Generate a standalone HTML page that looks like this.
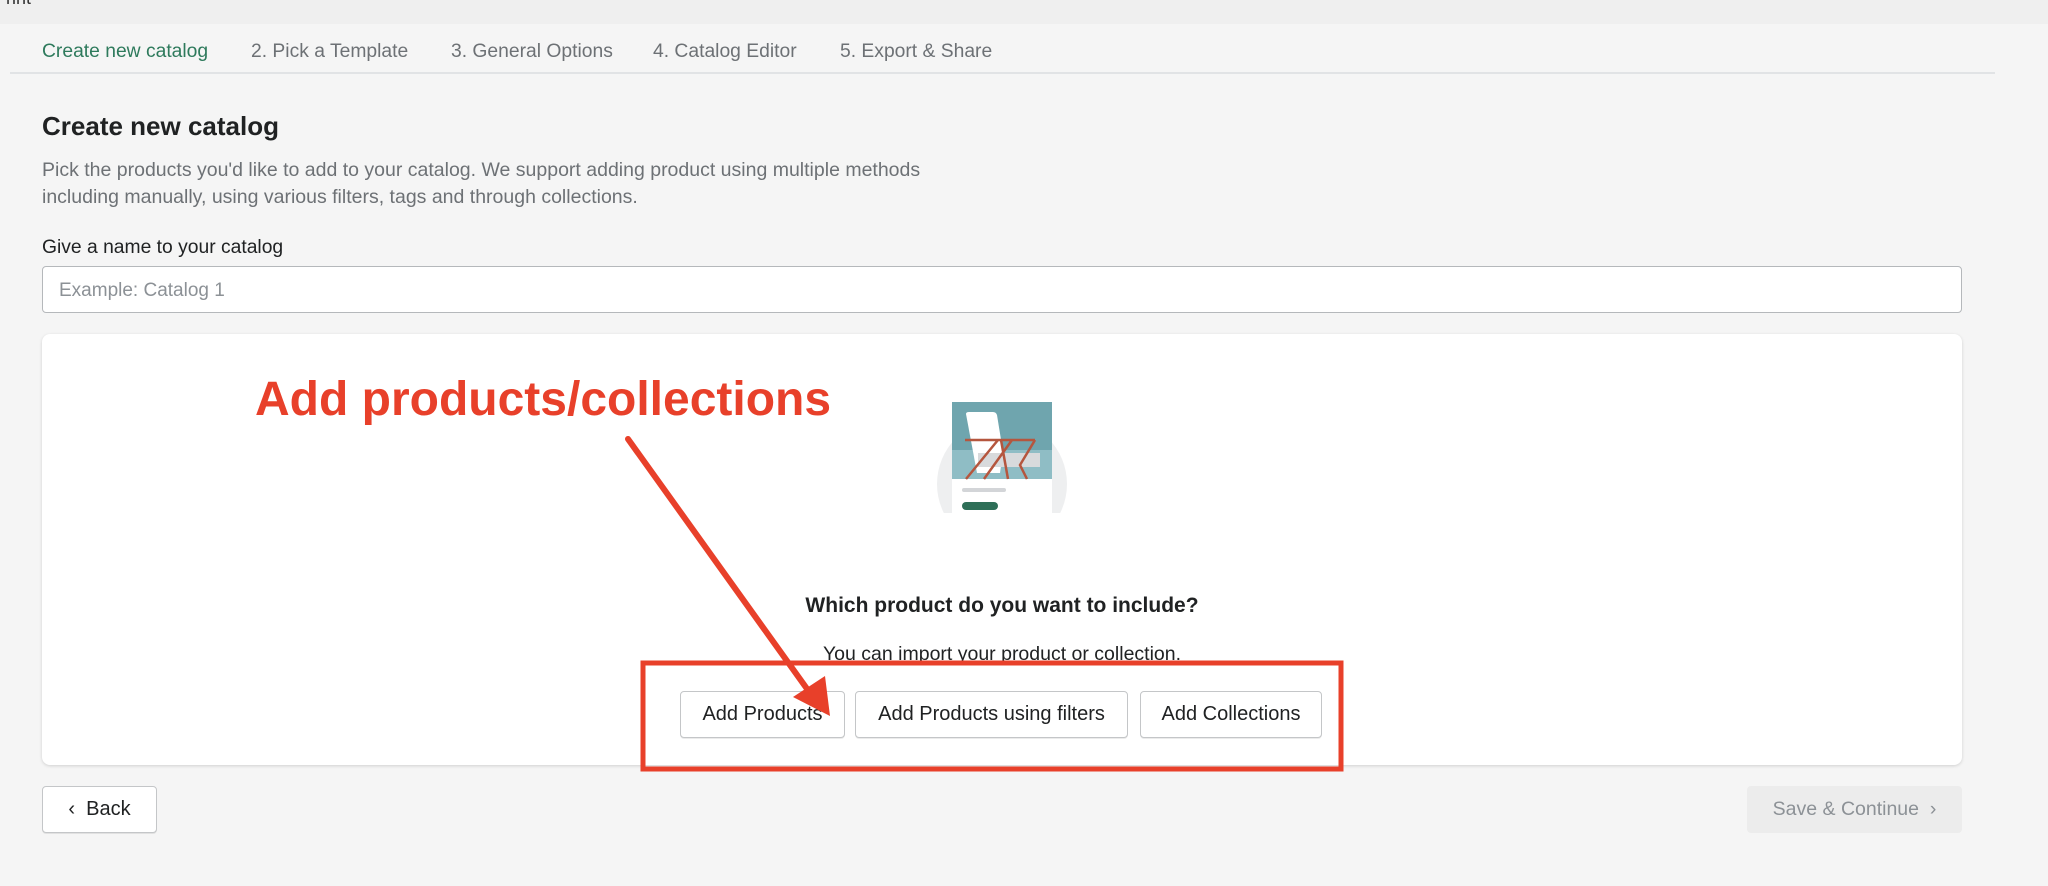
<!DOCTYPE html>
<html><head><meta charset="utf-8"><style>
*{box-sizing:border-box;margin:0;padding:0}
body{width:2048px;height:886px;background:#f5f5f5;font-family:"Liberation Sans",sans-serif;position:relative;overflow:hidden;color:#202223}
.a{position:absolute;white-space:nowrap}
.tab{top:41px;font-size:19.3px;color:#6d7175}
.btn{position:absolute;background:#fff;border:1px solid #c4c6c8;border-radius:4px;box-shadow:0 1px 0 rgba(0,0,0,.08);font-size:20px;color:#202223;display:flex;align-items:center;justify-content:center}
</style></head><body>
<div class="a" style="left:0;top:0;width:2048px;height:24px;background:#efefef"></div>
<div class="a" style="left:-6px;top:-12px;font-size:18px;color:#333">Print</div>
<div class="a tab" style="left:42px;color:#2e7a5c">Create new catalog</div>
<div class="a tab" style="left:251px">2. Pick a Template</div>
<div class="a tab" style="left:451px">3. General Options</div>
<div class="a tab" style="left:653px">4. Catalog Editor</div>
<div class="a tab" style="left:840px">5. Export &amp; Share</div>
<div class="a" style="left:10px;top:72px;width:1985px;height:2px;background:#e1e3e5"></div>
<div class="a" style="left:42px;top:111px;font-size:26px;font-weight:bold">Create new catalog</div>
<div class="a" style="left:42px;top:157px;font-size:19.5px;color:#6d7175;line-height:27px">Pick the products you'd like to add to your catalog. We support adding product using multiple methods<br>including manually, using various filters, tags and through collections.</div>
<div class="a" style="left:42px;top:237px;font-size:19.3px">Give a name to your catalog</div>
<div class="a" style="left:42px;top:266px;width:1920px;height:47px;background:#fff;border:1px solid #b5b8bb;border-radius:4px;font-size:19px;color:#8c9196;padding:13px 16px">Example: Catalog 1</div>
<div class="a" style="left:42px;top:334px;width:1920px;height:431px;background:#fff;border-radius:8px;box-shadow:0 1px 3px rgba(0,0,0,.15)"></div>
<svg class="a" style="left:920px;top:390px" width="160" height="130" viewBox="0 0 160 130">
<defs><clipPath id="c"><rect x="0" y="0" width="160" height="123"/></clipPath></defs>
<circle cx="82" cy="94" r="65" fill="#eeeff0" clip-path="url(#c)"/>
<rect x="32" y="12" width="100" height="111" fill="#fff"/>
<rect x="32" y="12" width="100" height="48" fill="#6fa5ae"/>
<rect x="32" y="60" width="100" height="29" fill="#8fbdc5"/>
<path d="M46 24 Q46 22 49 22 L73 22 Q76 22 77 25 L83 62 L80 83 L57 83Z" fill="#fff"/>
<rect x="58" y="63" width="62" height="14" fill="#d8dadc"/>
<path d="M45 50 H115 M92 50 L64 89 M78 50 L46 89 M81 50 L88 89 M115 50 L100 75 L107 89" stroke="#b5563e" stroke-width="2.5" fill="none"/>
<rect x="42" y="98" width="44" height="4" rx="2" fill="#d3d5d8"/>
<rect x="42" y="112" width="36" height="8" rx="4" fill="#2e6f58"/>
</svg>
<div class="a" style="left:0;width:2004px;text-align:center;top:594px;font-size:21px;font-weight:bold">Which product do you want to include?</div>
<div class="a" style="left:0;width:2004px;text-align:center;top:643px;font-size:19.5px">You can import your product or collection.</div>
<div class="btn" style="left:680px;top:691px;width:165px;height:47px">Add Products</div>
<div class="btn" style="left:855px;top:691px;width:273px;height:47px">Add Products using filters</div>
<div class="btn" style="left:1140px;top:691px;width:182px;height:47px">Add Collections</div>
<div class="btn" style="left:42px;top:786px;width:115px;height:47px">&#8249;&nbsp; Back</div>
<div class="a" style="left:1747px;top:786px;width:215px;height:47px;background:#ececec;border-radius:4px;color:#8c9196;font-size:19.5px;display:flex;align-items:center;justify-content:center">Save &amp; Continue &nbsp;&#8250;</div>
<div class="a" style="left:255px;top:372px;font-size:48px;font-weight:bold;color:#e8402a">Add products/collections</div>
<svg class="a" style="left:0;top:0" width="2048" height="886">
<rect x="643" y="663" width="698" height="106" fill="none" stroke="#e8402a" stroke-width="5"/>
<line x1="628" y1="439" x2="815" y2="700" stroke="#e8402a" stroke-width="6" stroke-linecap="round"/>
<polygon points="830,716 793,697 825,676" fill="#e8402a"/>
</svg>
</body></html>
